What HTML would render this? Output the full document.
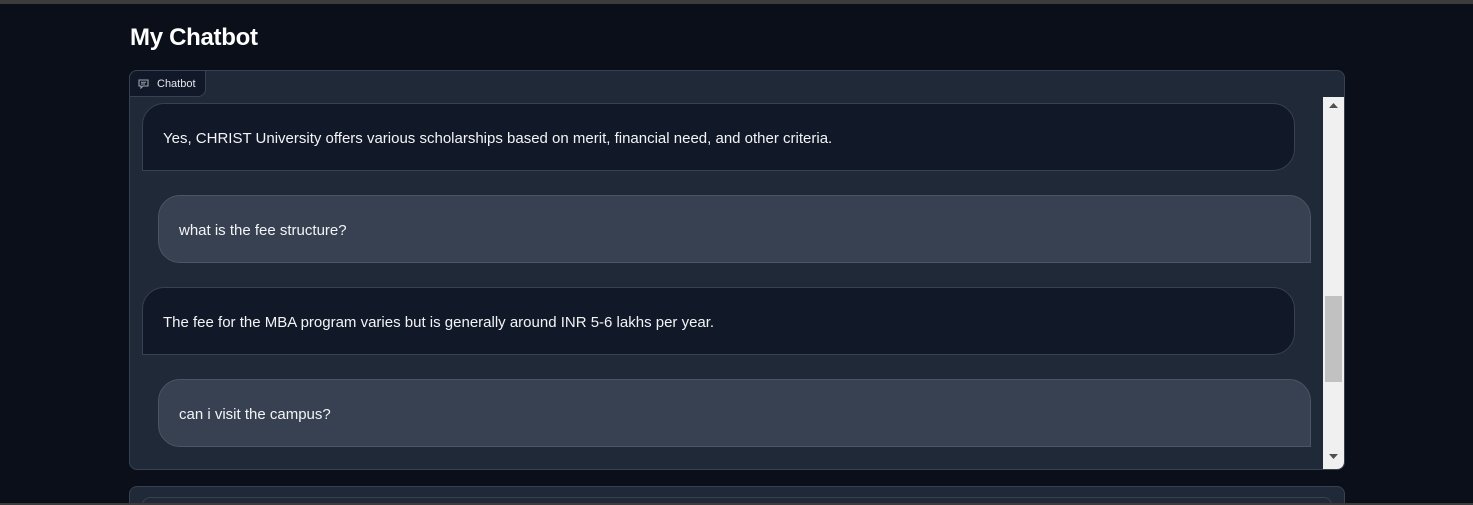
<!DOCTYPE html>
<html><head><meta charset="utf-8"><style>
*{box-sizing:border-box;margin:0;padding:0}
html,body{width:1473px;height:505px;overflow:hidden}
body{background:#0b0f19;position:relative;font-family:"Liberation Sans",sans-serif;color:#f3f4f6}
.top{position:absolute;left:0;top:0;width:1473px;height:4px;background:#3c3c3c}
.bot{position:absolute;left:0;top:503px;width:1473px;height:2px;background:#3c3c3c}
h1{position:absolute;left:130px;top:24px;font-size:24px;font-weight:bold;color:#fff;letter-spacing:-0.3px}
.box{position:absolute;left:129px;top:70px;width:1216px;height:400px;background:#1f2937;border:1px solid #374151;border-radius:8px;overflow:hidden}
.tab{position:absolute;left:129px;top:70px;width:77px;height:27px;background:#111827;border:1px solid #374151;border-radius:8px 0 8px 0;font-size:11px;color:#e5e7eb;padding:7px 0 0 27px}
.tab svg{position:absolute;left:8px;top:8px}
.msg{position:absolute;height:68px;border:1px solid #374151;font-size:15px;padding:26px 20px 0;color:#f3f4f6}
.b{left:142px;width:1153px;background:#111827;border-radius:22px 22px 22px 0}
.u{left:158px;width:1153px;background:#374151;border-color:#4b5563;border-radius:22px 22px 0 22px}
.sb{position:absolute;left:1323px;top:97px;width:21px;height:372px;background:#f0f0f0;border-radius:0 0 7px 0}
.th{position:absolute;left:1325px;top:296px;width:17px;height:86px;background:#c1c1c1}
.box2{position:absolute;left:129px;top:486px;width:1216px;height:19px;background:#1f2937;border:1px solid #374151;border-bottom:none;border-radius:8px 8px 0 0;overflow:hidden}
.box2 div{position:absolute;left:12px;top:10px;width:1190px;height:30px;border:1px solid #374151;border-radius:8px}
</style></head><body>
<div class="top"></div>
<h1>My Chatbot</h1>
<div class="box"></div>
<div class="tab"><svg width="11" height="10" viewBox="0 0 11 10"><path d="M1 1h9v6H5l-2 2V7H1z" fill="none" stroke="#9ca3af" stroke-width="1.1"/><path d="M3 3.2h5M3 5h4" stroke="#9ca3af" stroke-width="1"/></svg>Chatbot</div>
<div class="msg b" style="top:103px">Yes, CHRIST University offers various scholarships based on merit, financial need, and other criteria.</div>
<div class="msg u" style="top:195px">what is the fee structure?</div>
<div class="msg b" style="top:287px">The fee for the MBA program varies but is generally around INR 5-6 lakhs per year.</div>
<div class="msg u" style="top:379px">can i visit the campus?</div>
<div class="sb"></div>
<div class="th"></div>
<svg style="position:absolute;left:1329px;top:103px" width="9" height="6"><path d="M0 5L4.5 0L9 5z" fill="#505050"/></svg>
<svg style="position:absolute;left:1329px;top:454px" width="9" height="6"><path d="M0 0L4.5 5L9 0z" fill="#505050"/></svg>
<div class="box2"><div></div></div>
<div class="bot"></div>
</body></html>
